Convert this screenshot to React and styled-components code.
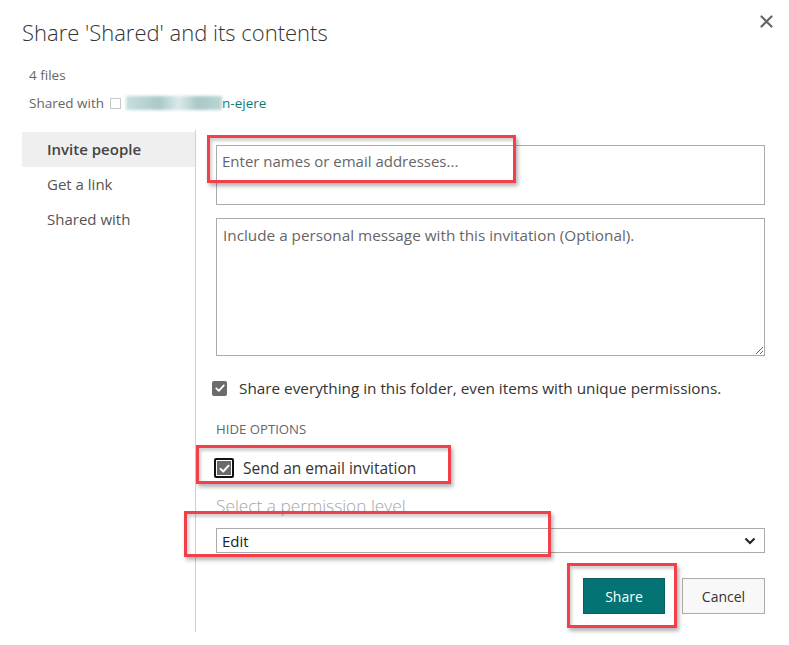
import React from "react"
import styled, { createGlobalStyle } from "styled-components"

const GlobalStyle = createGlobalStyle`
  html, body {
    margin: 0;
    padding: 0;
    background: #fff;
  }
  body {
    font-family: "Open Sans", "Noto Sans", sans-serif;
    color: #333;
  }
`

const Dialog = styled.div`
  width: 789px;
  height: 645px;
  box-sizing: border-box;
  background: #fff;
  overflow: hidden;
`

const Header = styled.header`
  display: flex;
  justify-content: space-between;
  align-items: flex-start;
  padding: 17px 16px 0 22px;
`

const Title = styled.h1`
  margin: 0;
  font-size: 22px;
  line-height: 30px;
  font-weight: 300;
  color: #333;
`

const CloseButton = styled.button`
  width: 14px;
  height: 14px;
  margin-top: -3px;
  padding: 0;
  border: none;
  background: none;
  cursor: pointer;
  display: flex;
  align-items: center;
  justify-content: center;
`

const Meta = styled.div`
  margin-top: 14px;
  padding-left: 29px;
  font-size: 13.5px;
  color: #666;
`

const MetaLine = styled.div`
  display: flex;
  align-items: center;
  height: 28px;
  line-height: 28px;
`

const TinyBox = styled.span`
  display: inline-block;
  width: 9px;
  height: 9px;
  border: 1px solid #c8c8c8;
  margin: 0 5px 0 6px;
`

const Blurred = styled.span`
  display: inline-block;
  width: 96px;
  height: 14px;
  background: linear-gradient(90deg, #c9dede 0%, #a9c9c9 35%, #dce9e9 55%, #a8c8c8 75%, #bcd5d5 100%);
  filter: blur(1.5px);
`

const Link = styled.a`
  color: #0f7b7b;
  text-decoration: none;
`

const Body = styled.div`
  display: flex;
  margin-top: 13px;
  height: 502px;
`

const Nav = styled.nav`
  width: 173px;
  margin-left: 22px;
  padding-top: 2px;
  border-right: 1px solid #d0d0d0;
  display: flex;
  flex-direction: column;
`

const NavItem = styled.div`
  height: 35px;
  line-height: 35px;
  padding-left: 25px;
  font-size: 15px;
  color: ${p => (p.$active ? "#444" : "#555")};
  font-weight: ${p => (p.$active ? 600 : 400)};
  background: ${p => (p.$active ? "#efefef" : "transparent")};
`

const Main = styled.main`
  flex: 1;
  padding: 15px 24px 0 20px;
  display: flex;
  flex-direction: column;
`

const Anchor = styled.div`
  position: relative;
`

const Highlight = styled.div`
  position: absolute;
  left: ${p => p.$x}px;
  top: ${p => p.$y}px;
  width: ${p => p.$w}px;
  height: ${p => p.$h}px;
  box-sizing: border-box;
  border: 3px solid #f2404a;
  box-shadow: 2px 3px 4px rgba(0, 0, 0, 0.3), inset 2px 3px 3px rgba(0, 0, 0, 0.18);
  pointer-events: none;
`

const NameInput = styled.div`
  box-sizing: border-box;
  height: 60px;
  border: 1px solid #ababab;
  padding: 4px 5px;
  font-size: 15px;
  line-height: 22px;
  color: #666;
`

const Message = styled.textarea`
  display: block;
  box-sizing: border-box;
  width: 100%;
  height: 138px;
  margin: 13px 0 0;
  border: 1px solid #ababab;
  padding: 6px 6px;
  font-family: "Open Sans", "Noto Sans", sans-serif;
  font-size: 15.3px;
  line-height: 20px;
  resize: vertical;
  outline: none;
  &::placeholder {
    color: #666;
  }
`

const CheckRow = styled.label`
  display: flex;
  align-items: center;
  margin-top: ${p => p.$mt}px;
  margin-left: ${p => p.$ml || 0}px;
  height: ${p => p.$h}px;
  font-size: ${p => p.$fs}px;
  color: #333;
  gap: ${p => p.$gap}px;
`

const Box = styled.span`
  box-sizing: border-box;
  width: ${p => p.$size}px;
  height: ${p => p.$size}px;
  border-radius: 2px;
  background: #6b6b6b;
  border: ${p => (p.$focused ? "2px solid #111" : "none")};
  box-shadow: ${p => (p.$focused ? "inset 0 0 0 1px #fff" : "none")};
  display: flex;
  align-items: center;
  justify-content: center;
  flex-shrink: 0;
`

const SectionLabel = styled.div`
  margin-top: 24px;
  height: 18px;
  line-height: 18px;
  font-size: 13.2px;
  color: #666;
  text-transform: uppercase;
`

const FieldLabel = styled.div`
  margin-top: 17px;
  height: 22px;
  line-height: 22px;
  font-size: 17.3px;
  font-weight: 300;
  color: #a6a6a6;
`

const Select = styled.div`
  box-sizing: border-box;
  margin-top: 11px;
  height: 25px;
  border: 1px solid #ababab;
  padding: 0 8px 0 5px;
  display: flex;
  align-items: center;
  justify-content: space-between;
  font-size: 15px;
  color: #222;
`

const Actions = styled.div`
  margin-top: 25px;
  display: flex;
  justify-content: flex-end;
  gap: 17px;
`

const Button = styled.button`
  box-sizing: border-box;
  height: 36px;
  width: ${p => p.$w}px;
  font-family: "Open Sans", "Noto Sans", sans-serif;
  font-size: 14px;
  border: 1px solid ${p => (p.$primary ? "#0a5e5e" : "#ababab")};
  background: ${p => (p.$primary ? "#037373" : "#f8f8f8")};
  color: ${p => (p.$primary ? "#fff" : "#333")};
  cursor: pointer;
  padding: 0;
`

const Check = ({ size }) => (
  <svg width={size} height={size} viewBox="0 0 12 12">
    <path d="M2.3 6.3 L4.8 8.8 L9.8 3.4" fill="none" stroke="#fff" strokeWidth="1.8" strokeLinecap="round" strokeLinejoin="round" />
  </svg>
)

const App = () => (
  <Dialog>
    <GlobalStyle />
    <Header>
      <Title>Share 'Shared' and its contents</Title>
      <CloseButton aria-label="Close">
        <svg width="13" height="13" viewBox="0 0 13 13">
          <path d="M1.5 1.5 L11.5 11.5 M11.5 1.5 L1.5 11.5" stroke="#666" strokeWidth="2.2" strokeLinecap="round" />
        </svg>
      </CloseButton>
    </Header>
    <Meta>
      <MetaLine>4 files</MetaLine>
      <MetaLine>
        Shared with <TinyBox />
        <Blurred />
        <Link href="#">n-ejere</Link>
      </MetaLine>
    </Meta>
    <Body>
      <Nav>
        <NavItem $active>Invite people</NavItem>
        <NavItem>Get a link</NavItem>
        <NavItem>Shared with</NavItem>
      </Nav>
      <Main>
        <Anchor>
          <NameInput>Enter names or email addresses...</NameInput>
          <Highlight $x={-9} $y={-10} $w={309} $h={48} />
        </Anchor>
        <Message placeholder="Include a personal message with this invitation (Optional)." />
        <CheckRow $mt={24} $ml={-4} $h={16} $fs={15.3} $gap={12}>
          <Box $size={15}>
            <Check size={12} />
          </Box>
          Share everything in this folder, even items with unique permissions.
        </CheckRow>
        <SectionLabel>Hide options</SectionLabel>
        <Anchor>
          <CheckRow $mt={20} $ml={-2} $h={20} $fs={15.5} $gap={9}>
            <Box $size={20} $focused>
              <Check size={13} />
            </Box>
            Send an email invitation
          </CheckRow>
          <Highlight $x={-20} $y={7} $w={255} $h={39} />
        </Anchor>
        <FieldLabel>Select a permission level</FieldLabel>
        <Anchor>
          <Select>
            Edit
            <svg width="12" height="8" viewBox="0 0 12 8">
              <path d="M1.5 1.5 L6 6 L10.5 1.5" fill="none" stroke="#222" strokeWidth="2" />
            </svg>
          </Select>
          <Highlight $x={-32} $y={-6} $w={367} $h={46} />
        </Anchor>
        <Actions>
          <Anchor>
            <Button $primary $w={82}>Share</Button>
            <Highlight $x={-16} $y={-15} $w={110} $h={65} />
          </Anchor>
          <Button $w={83}>Cancel</Button>
        </Actions>
      </Main>
    </Body>
  </Dialog>
)

export default App
